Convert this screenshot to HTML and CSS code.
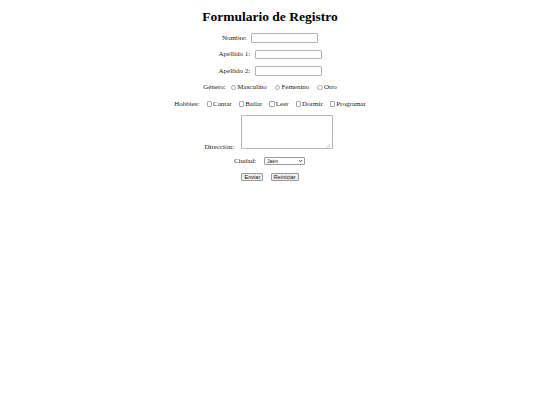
FILE: index.html
```html
<!DOCTYPE html>
<html lang="es">
<head>
<meta charset="utf-8">
<title>Formulario de Registro</title>
<link rel="stylesheet" href="styles.css">
</head>
<body>
<h1 class="title">Formulario de Registro</h1>
<form class="form">
  <div class="row"><label class="lbl" for="nombre">Nombre:</label><input class="text" type="text" id="nombre"></div>
  <div class="row"><label class="lbl" for="ap1">Apellido 1:</label><input class="text" type="text" id="ap1"></div>
  <div class="row"><label class="lbl" for="ap2">Apellido 2:</label><input class="text" type="text" id="ap2"></div>
  <div class="row row-opts row-radio"><span class="lbl">Género:</span>
    <label class="opt"><input class="radio" type="radio" name="g">Masculino</label>
    <label class="opt"><input class="radio" type="radio" name="g">Femenino</label>
    <label class="opt"><input class="radio" type="radio" name="g">Otro</label>
  </div>
  <div class="row row-opts"><span class="lbl">Hobbies:</span>
    <label class="opt"><input class="check" type="checkbox">Cantar</label>
    <label class="opt"><input class="check" type="checkbox">Bailar</label>
    <label class="opt"><input class="check" type="checkbox">Leer</label>
    <label class="opt"><input class="check" type="checkbox">Dormir</label>
    <label class="opt"><input class="check" type="checkbox">Programar</label>
  </div>
  <div class="row row-area"><label class="lbl lbl-area" for="dir">Dirección:</label>
    <span class="area-wrap"><textarea class="area" id="dir"></textarea><svg class="grip" width="5" height="5" viewBox="0 0 5 5"><path d="M0.5 4.5 L4.5 0.5 M2.5 4.5 L4.5 2.5" stroke="#b5b5b5" stroke-width="0.7" fill="none"/></svg></span>
  </div>
  <div class="row row-city"><label class="lbl" for="ciudad">Ciudad:</label>
    <span class="sel-wrap"><select class="sel" id="ciudad"><option>Jaén</option><option>Granada</option><option>Sevilla</option></select><svg class="chev" width="5" height="4" viewBox="0 0 5 4"><path d="M0.8 1 L2.5 2.8 L4.2 1" stroke="#333" stroke-width="0.9" fill="none"/></svg></span>
  </div>
  <div class="row row-btns"><button class="btn" type="submit">Enviar</button><button class="btn" type="reset">Reiniciar</button></div>
</form>
</body>
</html>
```
FILE: styles.css
```css
html {
  background: #fff;
}
body {
  margin: 0;
  font-family: "Liberation Serif", "Times New Roman", serif;
  color: #000;
}
.title {
  margin: 8.7px 0 8.8px;
  font-size: 13.5px;
  font-weight: bold;
  text-align: center;
  line-height: 15.5px;
}
.form {
  display: flex;
  flex-direction: column;
  gap: 6.5px;
}
.row {
  display: flex;
  justify-content: center;
  align-items: center;
  height: 10px;
  gap: 4.3px;
  font-size: 7px;
  line-height: 8px;
}
.lbl {
  white-space: nowrap;
  color: #1a1a1a;
}
.text {
  box-sizing: border-box;
  width: 67px;
  height: 9.5px;
  margin: 0;
  padding: 0;
  border: 1px solid #b4b4b4;
  border-radius: 1px;
  background: #fff;
  font-size: 5px;
}
.row-opts {
  gap: 7px;
}
.row-radio {
  gap: 8px;
}
.row-radio .lbl {
  margin-right: -3px;
}
.opt {
  display: flex;
  align-items: center;
  white-space: nowrap;
  color: #1a1a1a;
}
.radio,
.check {
  appearance: none;
  -webkit-appearance: none;
  box-sizing: border-box;
  width: 5.5px;
  height: 5.5px;
  margin: 0 1px 0 0;
  border: 0.8px solid #a8a8a8;
  background: #fff;
}
.radio {
  border-radius: 50%;
}
.check {
  border-radius: 1px;
}
.row-area {
  height: 34px;
  align-items: flex-end;
  gap: 6.5px;
}
.lbl-area {
  line-height: 7px;
  margin-bottom: -1.5px;
  margin-left: -3px;
}
.area-wrap {
  position: relative;
  display: block;
  width: 92px;
  height: 34px;
}
.area {
  display: block;
  box-sizing: border-box;
  width: 92px;
  height: 34px;
  margin: 0;
  padding: 0;
  border: 1px solid #b4b4b4;
  border-radius: 1px;
  resize: none;
  background: #fff;
}
.grip {
  position: absolute;
  right: 1.5px;
  bottom: 1.5px;
}
.row-city {
  gap: 8px;
  margin-left: -1px;
}
.sel-wrap {
  position: relative;
  display: block;
  width: 41px;
  height: 7.5px;
}
.sel {
  appearance: none;
  -webkit-appearance: none;
  display: block;
  box-sizing: border-box;
  width: 41px;
  height: 7.5px;
  margin: 0;
  padding: 0 0 0 2px;
  border: 0.8px solid #9a9a9a;
  border-radius: 1px;
  background: #fff;
  font-family: "Liberation Sans", Arial, sans-serif;
  font-size: 5px;
  line-height: 6px;
  color: #111;
}
.chev {
  position: absolute;
  right: 2.5px;
  top: 1.8px;
  pointer-events: none;
}
.row-btns {
  gap: 7.5px;
}
.btn {
  box-sizing: border-box;
  height: 8px;
  margin: 0;
  padding: 0 2px;
  border: 0.8px solid #9a9a9a;
  border-radius: 1px;
  background: #efefef;
  font-family: "Liberation Sans", Arial, sans-serif;
  font-size: 5.6px;
  line-height: 6px;
  color: #111;
}
```
